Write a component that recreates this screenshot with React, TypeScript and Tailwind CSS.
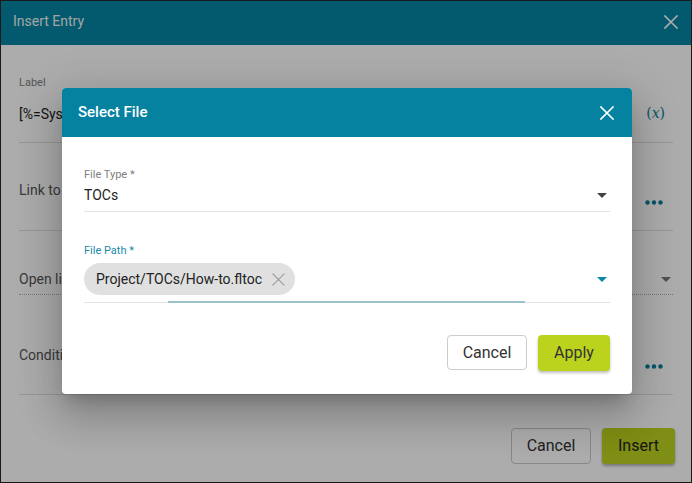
import React from "react";

const XIcon = ({ size = 14, color = "currentColor", sw = 1.8 }: { size?: number; color?: string; sw?: number }) => (
  <svg width={size} height={size} viewBox="0 0 14 14" fill="none">
    <path d="M1 1L13 13M13 1L1 13" stroke={color} strokeWidth={sw} strokeLinecap="square" />
  </svg>
);

const Caret = ({ color }: { color: string }) => (
  <svg width="10" height="5" viewBox="0 0 10 5">
    <path d="M0 0H10L5 5Z" fill={color} />
  </svg>
);

const Dots = () => (
  <svg width="18" height="5" viewBox="0 0 18 5">
    <circle cx="2.5" cy="2.5" r="2.2" fill="#0a7f9c" />
    <circle cx="9" cy="2.5" r="2.2" fill="#0a7f9c" />
    <circle cx="15.5" cy="2.5" r="2.2" fill="#0a7f9c" />
  </svg>
);

export default function App() {
  return (
    <div className="relative h-[483px] w-[692px] overflow-hidden border border-[#1a1a1a] bg-white font-['Roboto',sans-serif]">
      {/* Outer dialog */}
      <div className="flex h-[44px] items-center justify-between bg-[#0585a2] pb-[3px] pl-[12px] pr-[13px]">
        <span className="text-[14px] text-[#eef4f6]">Insert Entry</span>
        <XIcon size={14} color="#ffffff" sw={1.6} />
      </div>
      <div className="px-[18px]">
        <div className="h-[98px] border-b border-[#dedede] pt-[31px]">
          <div className="text-[11px] leading-[13px] text-[#808080]">Label</div>
          <div className="mt-[14px] flex items-center justify-between pr-[8px]">
            <span className="text-[14px] leading-[20px] text-[#222]">[%=System.LinkedTitle%]</span>
            <span className="font-['DejaVu_Serif',serif] text-[14px] text-[#0a7f9c]">
              (<i>x</i>)
            </span>
          </div>
        </div>
        <div className="flex h-[88px] items-start justify-between border-b border-[#dedede] pr-[10px] pt-[37px]">
          <span className="text-[14px] leading-[20px] text-[#555]">Link to</span>
          <div className="mt-[20px]"><Dots /></div>
        </div>
        <div className="flex h-[64px] items-end justify-between border-b border-dotted border-[#b0b0b0] pb-[5px] pr-[2px]">
          <span className="text-[14px] leading-[20px] text-[#555]">Open link in</span>
          <div className="mb-[7px]"><Caret color="#777" /></div>
        </div>
        <div className="flex h-[100px] items-center justify-between border-b border-[#dedede] pr-[10px] pt-[22px]">
          <span className="text-[14px] text-[#555]">Conditions</span>
          <div className="mt-[22px]"><Dots /></div>
        </div>
        <div className="-mr-[2px] mt-[33px] flex justify-end gap-[11px]">
          <button className="h-[36px] w-[80px] rounded-[4px] border border-[#c8c8c8] bg-white text-[16px] text-[#333]">Cancel</button>
          <button className="h-[36px] w-[73px] rounded-[4px] bg-[#bcd31e] text-[16px] text-[#222] shadow-[0_2px_3px_rgba(0,0,0,0.3)]">Insert</button>
        </div>
      </div>

      {/* Overlay */}
      <div className="absolute inset-0 bg-black/[0.325]" />

      {/* Inner dialog */}
      <div className="absolute left-[61px] top-[87px] h-[306px] w-[570px] overflow-hidden rounded-[4px] bg-white shadow-[0_11px_15px_-7px_rgba(0,0,0,0.2),0_24px_38px_3px_rgba(0,0,0,0.14),0_9px_46px_8px_rgba(0,0,0,0.12)]">
        <div className="flex h-[49px] items-center justify-between bg-[#0582a0] pl-[16px] pr-[18px]">
          <span className="text-[15px] font-medium text-white">Select File</span>
          <XIcon size={14} color="#ffffff" sw={1.6} />
        </div>
        <div className="px-[22px]">
          <div className="border-b border-[#e3e3e3] pb-[6px] pt-[31px]">
            <div className="text-[11px] leading-[13px] text-[#808080]">File Type *</div>
            <div className="mt-[4px] flex items-center justify-between pr-[3px]">
              <span className="text-[14px] leading-[20px] text-[#222]">TOCs</span>
              <Caret color="#444" />
            </div>
          </div>
          <div className="relative border-b border-[#e3e3e3] pb-[7px] pt-[32px]">
            <div className="text-[11px] leading-[13px] text-[#1a8aa6]">File Path *</div>
            <div className="mt-[6px] flex items-center justify-between pr-[3px]">
              <div className="flex h-[32px] items-center gap-[10px] rounded-full bg-[#e0e0e0] pl-[12px] pr-[10px]">
                <span className="text-[14px] text-[#222]">Project/TOCs/How-to.fltoc</span>
                <XIcon size={13} color="#9a9a9a" sw={1.2} />
              </div>
              <div className="mt-[1px]"><Caret color="#0a88a6" /></div>
            </div>
            <div className="absolute bottom-[-1px] left-[84px] h-[2px] w-[357px] bg-[#9bc4ca]" />
          </div>
          <div className="mt-[32px] flex justify-end gap-[11px]">
            <button className="h-[35px] w-[80px] rounded-[4px] border border-[#cdcdcd] bg-white text-[16px] text-[#333]">Cancel</button>
            <button className="h-[36px] w-[72px] rounded-[4px] bg-[#bcd31e] text-[16px] text-[#333] shadow-[0_2px_3px_rgba(0,0,0,0.25)]">Apply</button>
          </div>
        </div>
      </div>
    </div>
  );
}
